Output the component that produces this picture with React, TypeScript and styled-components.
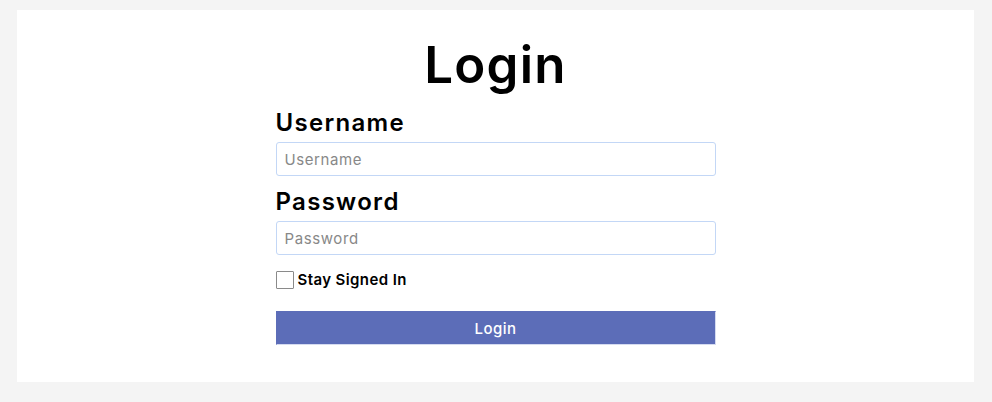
import styled, { createGlobalStyle } from 'styled-components';

const GlobalStyle = createGlobalStyle`
  html, body {
    margin: 0;
    padding: 0;
    background: #f4f4f4;
  }
  body {
    font-family: Inter, 'Noto Sans', sans-serif;
    color: #000;
  }
`;

const Page = styled.main`
  padding: 10px 18px 21px 17px;
`;

const Card = styled.section`
  background: #fff;
  display: flex;
  justify-content: center;
  padding: 26px 0 37px;
`;

const Form = styled.form`
  width: 440px;
  display: flex;
  flex-direction: column;
`;

const Title = styled.h1`
  margin: 0 0 14px;
  font-size: 51px;
  font-weight: 600;
  letter-spacing: 1.2px;
  line-height: 58px;
  text-align: center;
`;

const Label = styled.label`
  font-size: 24px;
  font-weight: 600;
  letter-spacing: 1.3px;
  line-height: 30px;
  margin-bottom: 4px;
`;

const Input = styled.input`
  box-sizing: border-box;
  width: 440px;
  height: 34px;
  padding: 0 8px;
  border: 1px solid #c3d7f6;
  border-radius: 3px;
  font-family: inherit;
  font-size: 15px;
  letter-spacing: 0.6px;
  margin-bottom: 11px;

  &::placeholder {
    color: #888;
  }
`;

const CheckRow = styled.label`
  display: flex;
  align-items: center;
  gap: 4px;
  margin: 4px 0 22px;
  font-size: 15px;
  font-weight: 600;
  letter-spacing: 0.4px;
`;

const Box = styled.input`
  appearance: none;
  box-sizing: border-box;
  width: 18px;
  height: 18px;
  margin: 0;
  border: 1px solid #8a8a8a;
  border-radius: 1px;
  background: #fff;
`;

const Button = styled.button`
  box-sizing: border-box;
  width: 440px;
  height: 34px;
  background: #5c6db8;
  color: #fff;
  border: 1px solid #d5dbf0;
  border-top-color: #5c6db8;
  border-left-color: #5c6db8;
  font-family: inherit;
  font-size: 15px;
  font-weight: 500;
  letter-spacing: 0.5px;
`;

function App() {
  return (
    <>
      <GlobalStyle />
      <Page>
        <Card>
          <Form onSubmit={(e) => e.preventDefault()}>
            <Title>Login</Title>
            <Label htmlFor="username">Username</Label>
            <Input id="username" placeholder="Username" />
            <Label htmlFor="password">Password</Label>
            <Input id="password" type="password" placeholder="Password" />
            <CheckRow>
              <Box type="checkbox" />
              Stay Signed In
            </CheckRow>
            <Button type="submit">Login</Button>
          </Form>
        </Card>
      </Page>
    </>
  );
}

export default App;
